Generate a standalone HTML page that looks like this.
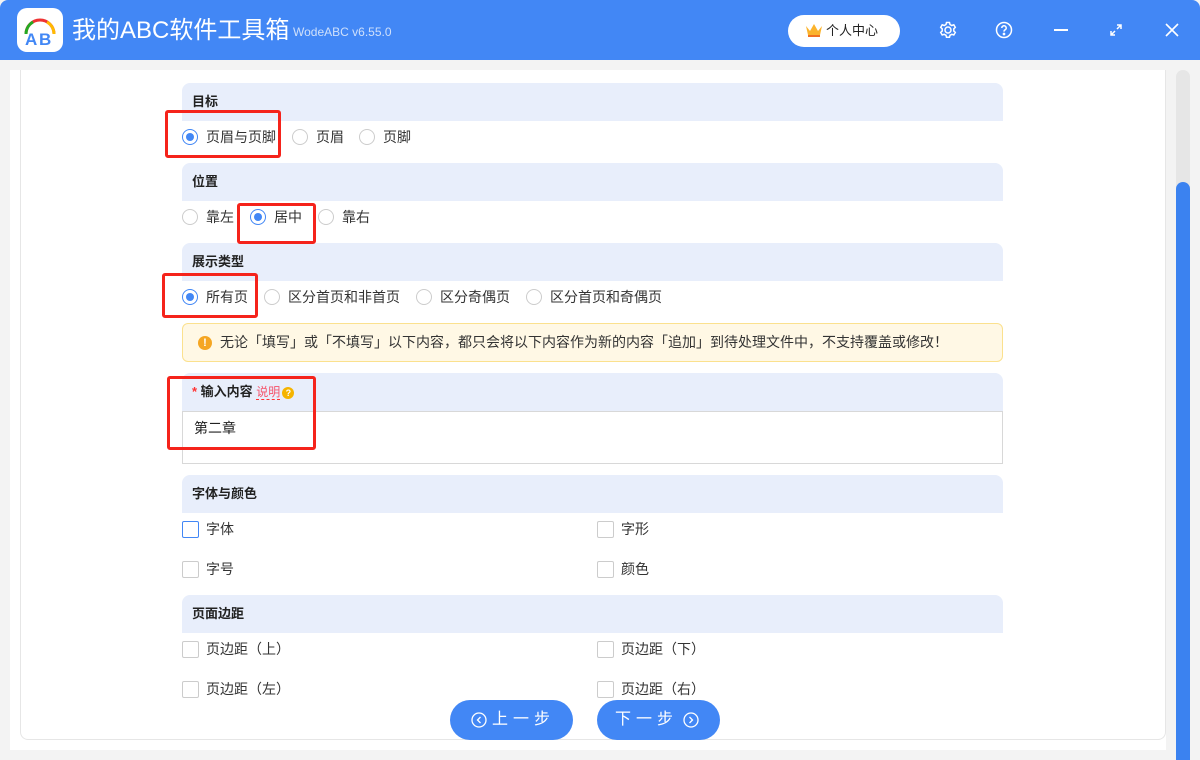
<!DOCTYPE html>
<html><head><meta charset="utf-8"><style>
*{margin:0;padding:0;box-sizing:border-box}
body{width:1200px;height:760px;overflow:hidden;background:#f3f3f3;font-family:"Liberation Sans","Noto Sans CJK SC",sans-serif;font-size:13px;color:#333;position:relative}
.a{position:absolute}
.top{left:0;top:0;width:1200px;height:60px;background:#4287f5;border-radius:8px 8px 0 0}
.hd{position:absolute;left:182px;width:821px;height:38px;background:#e8eefb;border-radius:8px 8px 0 0;padding-left:10px;line-height:38px;font-weight:bold;font-size:13px;color:#222}
.opt{position:absolute;height:20px;line-height:20px;font-size:14px;color:#333;padding-left:24px}
.r::before{content:"";position:absolute;left:0;top:2px;width:14px;height:14px;border:1px solid #ccc;border-radius:50%;background:#fff}
.r.on::before{border-color:#4287f5}
.r.on::after{content:"";position:absolute;left:4px;top:6px;width:8px;height:8px;border-radius:50%;background:#4287f5}
.c::before{content:"";position:absolute;left:0;top:2px;width:15px;height:15px;border:1px solid #ccc;border-radius:2px;background:#fff}
.c.blue::before{border-color:#4287f5}
.red{position:absolute;border:3px solid #f5231b;border-radius:3px}
.btn{position:absolute;top:700px;width:123px;height:40px;border-radius:20px;background:#4287f5;color:#fff;font-size:16px;line-height:40px;text-align:center;letter-spacing:5px}
</style></head><body>
<div class="a top"></div>
<div class="a" style="left:17px;top:8px;width:46px;height:44px;background:#fff;border-radius:10px"></div>
<svg class="a" style="left:17px;top:8px" width="46" height="44" viewBox="0 0 46 44">
<path d="M9 26 A14 14 0 0 1 37 26" fill="none" stroke="#e33" stroke-width="3"/>
<path d="M9 26 A14 14 0 0 1 16 14" fill="none" stroke="#2a2" stroke-width="3"/>
<path d="M30 14 A14 14 0 0 1 37 26" fill="none" stroke="#fb0" stroke-width="3"/>
<text x="8" y="37" font-family="Liberation Sans" font-weight="bold" font-size="17" fill="#4287f5">A</text>
<text x="22" y="37" font-family="Liberation Sans" font-weight="bold" font-size="17" fill="#4287f5">B</text>
</svg>
<div class="a" style="left:72px;top:15px;color:#fff;font-size:24px;line-height:32px">我的ABC软件工具箱</div>
<div class="a" style="left:293px;top:25px;color:#cfe0fb;font-size:12px">WodeABC v6.55.0</div>
<div class="a" style="left:788px;top:15px;width:112px;height:32px;background:#fff;border-radius:16px;line-height:32px;font-size:13px;padding-left:38px;color:#222">个人中心</div>
<svg class="a" style="left:805px;top:22px" width="18" height="16"><path d="M1 4 L5 9 L9 2 L13 9 L17 4 L15 13 L3 13Z" fill="#fbb32c"/><rect x="3" y="13" width="12" height="2" fill="#f07020"/></svg>
<svg class="a" style="left:938px;top:20px" width="20" height="20" fill="none" stroke="#fff" stroke-width="1.5"><circle cx="10" cy="10" r="3"/><path d="M8.5 2.5h3l.5 2 1.8 1 2-.7 1.5 2.6-1.5 1.4v2.2l1.5 1.4-1.5 2.6-2-.7-1.8 1-.5 2h-3l-.5-2-1.8-1-2 .7-1.5-2.6 1.5-1.4V8.8L2.7 7.4 4.2 4.8l2 .7 1.8-1z"/></svg>
<svg class="a" style="left:994px;top:20px" width="20" height="20" fill="none" stroke="#fff" stroke-width="1.5"><circle cx="10" cy="10" r="7.5"/><path d="M7.8 8a2.2 2.2 0 1 1 3 2c-.7.3-.8.8-.8 1.6"/><circle cx="10" cy="14" r=".6" fill="#fff"/></svg>
<div class="a" style="left:1054px;top:29px;width:14px;height:2px;background:#fff"></div>
<svg class="a" style="left:1108px;top:22px" width="16" height="16" stroke="#fff" stroke-width="1.5" fill="none"><path d="M3 13l4-4M13 3L9 7M3 9v4h4M13 7V3H9"/></svg>
<svg class="a" style="left:1164px;top:22px" width="16" height="16" stroke="#fff" stroke-width="1.6"><path d="M2 2l12 12M14 2L2 14"/></svg>
<div class="a" style="left:10px;top:70px;width:1156px;height:680px;background:#fff"></div>
<div class="a" style="left:20px;top:70px;width:1146px;height:670px;border:1px solid #e6e6e6;border-top:none;border-radius:0 0 8px 8px"></div>
<div class="a" style="left:1176px;top:70px;width:14px;height:690px;background:#e6e6e6;border-radius:7px"></div>
<div class="a" style="left:1176px;top:182px;width:14px;height:578px;background:#3b82f0;border-radius:7px 7px 0 0"></div>

<div class="hd" style="top:83px">目标</div>
<div class="opt r on" style="left:182px;top:127px">页眉与页脚</div>
<div class="opt r" style="left:292px;top:127px">页眉</div>
<div class="opt r" style="left:359px;top:127px">页脚</div>
<div class="hd" style="top:163px">位置</div>
<div class="opt r" style="left:182px;top:207px">靠左</div>
<div class="opt r on" style="left:250px;top:207px">居中</div>
<div class="opt r" style="left:318px;top:207px">靠右</div>
<div class="hd" style="top:243px">展示类型</div>
<div class="opt r on" style="left:182px;top:287px">所有页</div>
<div class="opt r" style="left:264px;top:287px">区分首页和非首页</div>
<div class="opt r" style="left:416px;top:287px">区分奇偶页</div>
<div class="opt r" style="left:526px;top:287px">区分首页和奇偶页</div>
<div class="a" style="left:182px;top:323px;width:821px;height:39px;background:#fff8e5;border:1px solid #fbe18e;border-radius:6px;line-height:37px;padding-left:37px;font-size:14px;color:#333">无论「填写」或「不填写」以下内容，都只会将以下内容作为新的内容「追加」到待处理文件中，不支持覆盖或修改！</div>
<div class="a" style="left:198px;top:336px;width:14px;height:14px;border-radius:50%;background:#f5a623;color:#fff;font-size:11px;font-weight:bold;text-align:center;line-height:14px">!</div>
<div class="hd" style="top:373px"><span style="color:#f33">*</span> 输入内容 <span style="color:#f5536b;font-weight:normal;font-size:12px;border-bottom:1px dashed #f33">说明</span><span style="display:inline-block;width:12px;height:12px;border-radius:50%;background:#f5b400;color:#fff;font-size:9px;line-height:12px;text-align:center;margin-left:2px;vertical-align:middle">?</span></div>
<div class="a" style="left:182px;top:411px;width:821px;height:53px;border:1px solid #d8d8d8;padding:6px 11px;font-size:14px;color:#222;line-height:20px">第二章</div>
<div class="hd" style="top:475px">字体与颜色</div>
<div class="opt c blue" style="left:182px;top:519px">字体</div>
<div class="opt c" style="left:597px;top:519px">字形</div>
<div class="opt c" style="left:182px;top:559px">字号</div>
<div class="opt c" style="left:597px;top:559px">颜色</div>
<div class="hd" style="top:595px">页面边距</div>
<div class="opt c" style="left:182px;top:639px">页边距（上）</div>
<div class="opt c" style="left:597px;top:639px">页边距（下）</div>
<div class="opt c" style="left:182px;top:679px">页边距（左）</div>
<div class="opt c" style="left:597px;top:679px">页边距（右）</div>

<div class="red" style="left:165px;top:110px;width:116px;height:48px"></div>
<div class="red" style="left:237px;top:203px;width:79px;height:41px"></div>
<div class="red" style="left:162px;top:273px;width:96px;height:45px"></div>
<div class="red" style="left:167px;top:376px;width:149px;height:74px"></div>

<div class="btn" style="left:450px;padding-left:24px">上一步</div>
<svg class="a" style="left:471px;top:712px" width="16" height="16" fill="none" stroke="#fff" stroke-width="1.3"><circle cx="8" cy="8" r="7"/><path d="M9.5 5L6.5 8l3 3"/></svg>
<div class="btn" style="left:597px;padding-right:24px">下一步</div>
<svg class="a" style="left:683px;top:712px" width="16" height="16" fill="none" stroke="#fff" stroke-width="1.3"><circle cx="8" cy="8" r="7"/><path d="M6.5 5l3 3-3 3"/></svg>
</body></html>
